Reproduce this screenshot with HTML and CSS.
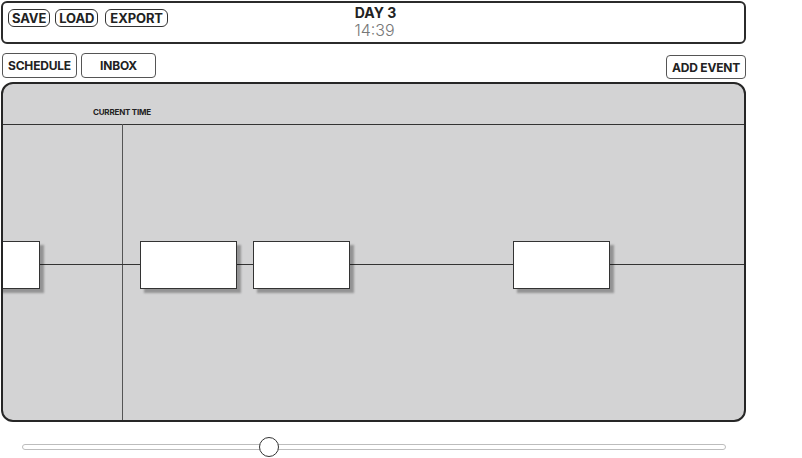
FILE: index.html
```html
<!doctype html>
<html lang="en">
<head>
	<meta charset="utf-8">
	<title>Schedule</title>
	<link rel="stylesheet" href="styles.css">
</head>
<body>
	<div class="app">
		<header class="topbar">
			<div class="file-buttons">
				<button class="pill">SAVE</button>
				<button class="pill">LOAD</button>
				<button class="pill wide">EXPORT</button>
			</div>
			<div class="clock">
				<div class="day">DAY 3</div>
				<div class="time">14:39</div>
			</div>
		</header>
		<nav class="toolbar">
			<div class="tabs">
				<button class="tab">SCHEDULE</button>
				<button class="tab">INBOX</button>
			</div>
			<button class="tab add">ADD EVENT</button>
		</nav>
		<section class="board">
			<div class="now-label">CURRENT TIME</div>
			<div class="hline"></div>
			<div class="vline"></div>
			<div class="track"></div>
			<div class="event" style="left:-60px"></div>
			<div class="event" style="left:137px"></div>
			<div class="event" style="left:250px"></div>
			<div class="event" style="left:510px"></div>
		</section>
		<div class="scrub">
			<input type="range" min="0" max="1000" value="346">
		</div>
	</div>
</body>
</html>
```
FILE: styles.css
```css
* {
	box-sizing: border-box;
}
html, body {
	margin: 0;
	padding: 0;
	background-color: #FFFFFF;
	font-family: "Inter", "DejaVu Sans", sans-serif;
	color: #222222;
}
.app {
	width: 746px;
	padding: 1px 0 0 1px;
}
.topbar {
	position: relative;
	display: flex;
	align-items: flex-start;
	height: 43px;
	border: 2px solid #2b2b2b;
	border-radius: 6px;
	padding: 6px 0 0 5px;
}
.file-buttons {
	display: flex;
	gap: 5px;
}
button {
	font-family: inherit;
	font-weight: 700;
	color: #222222;
	background-color: #FFFFFF;
	cursor: pointer;
}
.pill {
	height: 18px;
	padding: 0 3px;
	border: 1px solid #333333;
	border-radius: 6px;
	font-size: 13px;
	line-height: 16px;
	letter-spacing: -0.1px;
}
.pill.wide {
	margin-left: 2px;
	padding: 0 4px;
}
.clock {
	position: absolute;
	left: 0;
	right: 0;
	top: 2px;
	text-align: center;
	pointer-events: none;
}
.day {
	font-size: 14px;
	font-weight: 700;
	line-height: 16px;
	padding-left: 4px;
}
.time {
	font-size: 16px;
	font-weight: 300;
	line-height: 18px;
	color: #777777;
	padding-left: 2px;
}
.toolbar {
	display: flex;
	justify-content: space-between;
	align-items: flex-start;
	margin-top: 9px;
	padding-left: 1px;
}
.tabs {
	display: flex;
	gap: 4px;
}
.tab {
	height: 25px;
	width: 75px;
	padding: 0;
	border: 1px solid #555555;
	border-radius: 4px;
	font-size: 12px;
	letter-spacing: -0.2px;
}
.tab.add {
	width: 80px;
	height: 24px;
	margin-top: 2px;
}
.board {
	position: relative;
	height: 340px;
	margin-top: 3px;
	border: 2px solid #262626;
	border-radius: 12px;
	background-color: #d3d3d4;
	overflow: hidden;
}
.now-label {
	position: absolute;
	left: 90px;
	top: 23px;
	font-size: 8px;
	font-weight: 700;
	letter-spacing: -0.2px;
}
.hline {
	position: absolute;
	left: 0;
	right: 0;
	top: 40px;
	height: 1px;
	background-color: #333333;
}
.vline {
	position: absolute;
	left: 119px;
	top: 40px;
	bottom: 0;
	width: 1px;
	background-color: #555555;
}
.track {
	position: absolute;
	left: 0;
	right: 0;
	top: 180px;
	height: 1px;
	background-color: #333333;
}
.event {
	position: absolute;
	top: 157px;
	width: 97px;
	height: 48px;
	background-color: #FFFFFF;
	border: 1px solid #333333;
	box-shadow: 4px 4px 2px rgba(0, 0, 0, 0.3);
}
.scrub {
	padding: 14px 20px 0 21px;
}
.scrub input {
	-webkit-appearance: none;
	appearance: none;
	display: block;
	width: 704px;
	height: 22px;
	margin: 0;
	background: transparent;
}
.scrub input::-webkit-slider-runnable-track {
	height: 6px;
	border: 1px solid #bdbdbd;
	border-radius: 3px;
	background-color: #FFFFFF;
}
.scrub input::-webkit-slider-thumb {
	-webkit-appearance: none;
	width: 20px;
	height: 20px;
	margin-top: -8px;
	border: 1px solid #333333;
	border-radius: 50%;
	background-color: #FFFFFF;
}
```
